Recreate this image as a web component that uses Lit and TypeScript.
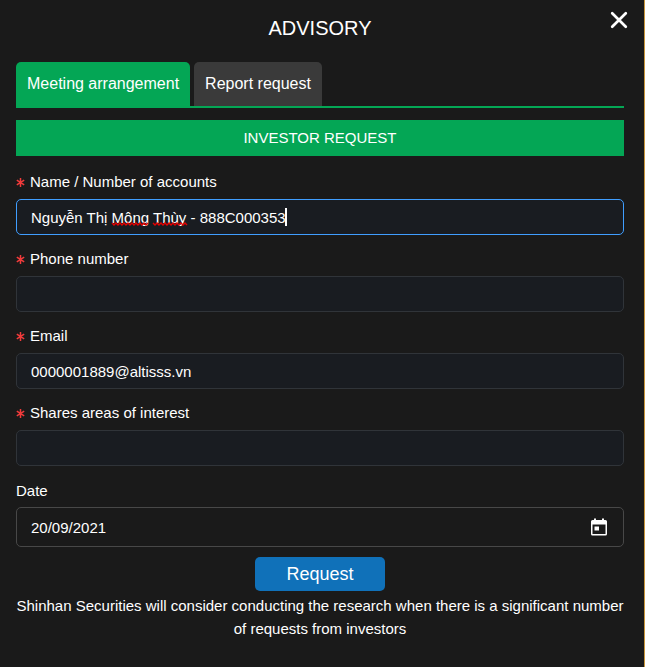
import { LitElement, html, css, svg, nothing } from "lit";
import { customElement, property, state } from "lit/decorators.js";
import { classMap } from "lit/directives/class-map.js";

interface Field {
  id: string;
  label: string;
  value: string;
  active?: boolean;
}

const FIELDS: Field[] = [
  { id: "account", label: "Name / Number of accounts", value: "Nguyễn Thị Mông Thùy - 888C000353", active: true },
  { id: "phone", label: "Phone number", value: "" },
  { id: "email", label: "Email", value: "0000001889@altisss.vn" },
  { id: "areas", label: "Shares areas of interest", value: "" },
];

const TABS = ["Meeting arrangement", "Report request"];

const wave = (from: number, to: number) => {
  let d = `M${from} 2`;
  for (let x = from + 2, i = 0; x <= to; x += 2, i++) d += ` L${x} ${i % 2 ? 2 : 4}`;
  return d;
};

@customElement("request-field")
export class RequestField extends LitElement {
  @property() name = "";
  @property() label = "";
  @property() value = "";
  @property({ type: Boolean }) active = false;

  static styles = css`
    :host {
      display: flex;
      flex-direction: column;
      gap: 5px;
    }
    * {
      box-sizing: border-box;
    }
    .label {
      display: flex;
      align-items: center;
      gap: 5px;
      font-size: 15px;
      line-height: 24px;
      color: #fff;
    }
    .star {
      width: 9px;
      height: 9px;
      flex: none;
      stroke: #f23b3b;
      stroke-width: 1.5;
    }
    .control {
      position: relative;
      display: flex;
    }
    .input {
      width: 100%;
      height: 36px;
      margin: 0;
      padding: 0 14px;
      border: 1px solid #303439;
      border-radius: 5px;
      outline: none;
      background: #191c21;
      color: #fff;
      font-family: inherit;
      font-size: 15px;
    }
    .input.active {
      border-color: #409eff;
    }
    .marks {
      position: absolute;
      left: 15px;
      top: 9px;
      width: 260px;
      height: 19px;
      pointer-events: none;
    }
    .squiggle {
      fill: none;
      stroke: #e60000;
      stroke-width: 1.4;
    }
    .caret {
      fill: #fff;
    }
  `;

  render() {
    return html`
      <label class="label" for=${this.name}>
        <svg class="star" viewBox="0 0 9 9" aria-hidden="true">
          <path d="M4.5 0V9M.8 2.2L8.2 6.8M8.2 2.2L.8 6.8" />
        </svg>
        ${this.label}
      </label>
      <div class="control">
        <input
          id=${this.name}
          class=${classMap({ input: true, active: this.active })}
          type="text"
          required
          spellcheck="false"
          .value=${this.value}
        />
        ${this.active
          ? html`<svg class="marks" viewBox="0 0 260 19" aria-hidden="true">
              ${svg`<g class="squiggle" transform="translate(0 13)">
                <path d=${wave(81, 118)} /><path d=${wave(122, 156)} />
              </g><rect class="caret" x="254" y="0" width="2" height="18" />`}
            </svg>`
          : nothing}
      </div>
    `;
  }
}

@customElement("app-root")
export class AppRoot extends LitElement {
  @state() private tab = 0;

  static styles = css`
    :host {
      display: block;
      min-height: 100vh;
      box-sizing: border-box;
      padding: 0 20px 26px 16px;
      border-right: 1px solid #c8963c;
      background: #1a1a1a;
      color: #fff;
      font-family: "Liberation Sans", Arial, sans-serif;
      font-size: 15px;
    }
    * {
      box-sizing: border-box;
    }
    button {
      margin: 0;
      padding: 0;
      border: 0;
      background: none;
      color: inherit;
      font-family: inherit;
      cursor: pointer;
    }
    .head {
      position: relative;
      padding: 16px 0 22px;
    }
    .title {
      margin: 0;
      font-size: 20px;
      line-height: 24px;
      font-weight: 400;
      text-align: center;
    }
    .close {
      position: absolute;
      top: 8px;
      right: -8px;
      width: 24px;
      height: 24px;
    }
    .icon {
      display: block;
      width: 24px;
      height: 24px;
    }
    .tabs {
      display: flex;
      gap: 4px;
      border-bottom: 2px solid #04a655;
    }
    .tab {
      height: 44px;
      padding: 0 11px;
      border-radius: 5px 5px 0 0;
      background: #3a3a3a;
      font-size: 16px;
    }
    .tab.on {
      background: #04a655;
    }
    .banner {
      margin: 12px 0 14px;
      background: #04a655;
      font-size: 15px;
      line-height: 36px;
      font-weight: 400;
      text-align: center;
    }
    .form {
      display: flex;
      flex-direction: column;
    }
    .fields {
      display: flex;
      flex-direction: column;
      gap: 12px;
    }
    .date-label {
      margin: 13px 0 4px;
      line-height: 24px;
    }
    .date {
      display: flex;
      align-items: center;
      height: 40px;
      padding: 0 12px 0 14px;
      border: 1px solid #484848;
      border-radius: 5px;
    }
    .date-input {
      flex: 1;
      min-width: 0;
      padding: 0;
      border: 0;
      outline: none;
      background: none;
      color: inherit;
      font-family: inherit;
      font-size: 15px;
    }
    .calendar {
      width: 24px;
      height: 24px;
    }
    .submit {
      align-self: center;
      width: 130px;
      height: 34px;
      margin: 10px 0 3px;
      border-radius: 5px;
      background: #1071b9;
      font-size: 18px;
    }
    .note {
      margin: 0;
      line-height: 23px;
      text-align: center;
    }
  `;

  render() {
    return html`
      <header class="head">
        <h1 class="title">ADVISORY</h1>
        <button class="close" type="button" aria-label="Close">
          <svg class="icon" viewBox="0 0 24 24" fill="none" stroke="#fff" stroke-width="2.7" stroke-linecap="round">
            <path d="M4.200 5.200L17.800 18.800M17.800 5.200L4.200 18.800" />
          </svg>
        </button>
      </header>
      <div class="tabs" role="tablist">
        ${TABS.map(
          (name, i) => html`<button
            class=${classMap({ tab: true, on: i === this.tab })}
            type="button"
            role="tab"
            aria-selected=${i === this.tab ? "true" : "false"}
            @click=${() => (this.tab = i)}
          >${name}</button>`
        )}
      </div>
      <h2 class="banner">INVESTOR REQUEST</h2>
      <form class="form" @submit=${(e: Event) => e.preventDefault()}>
        <div class="fields">
          ${FIELDS.map(
            (f) => html`<request-field
              .name=${f.id}
              .label=${f.label}
              .value=${f.value}
              .active=${f.active ?? false}
            ></request-field>`
          )}
        </div>
        <label class="date-label" for="date">Date</label>
        <div class="date">
          <input class="date-input" id="date" type="text" .value=${"20/09/2021"} />
          <button class="calendar" type="button" aria-label="Choose date">
            <svg class="icon" viewBox="0 0 24 24" fill="#fff">
              <path
                fill-rule="evenodd"
                d="M7 3.500h2V5h6V3.500h2V5h1.500a1.500 1.500 0 0 1 1.500 1.500V19a1.500 1.500 0 0 1-1.500 1.500h-13A1.500 1.500 0 0 1 4 19V6.500A1.500 1.500 0 0 1 5.500 5H7zM5.500 9.500V19h13V9.500z"
              />
              <path d="M7.500 11.500h4.500v4H7.500z" />
            </svg>
          </button>
        </div>
        <button class="submit" type="submit">Request</button>
      </form>
      <p class="note">
        Shinhan Securities will consider conducting the research when there is a significant number of requests from
        investors
      </p>
    `;
  }
}
